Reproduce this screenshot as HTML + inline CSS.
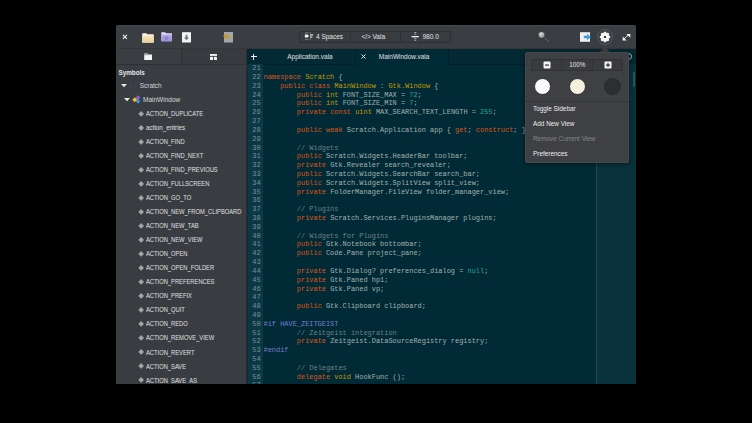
<!DOCTYPE html>
<html><head><meta charset="utf-8">
<style>
*{box-sizing:border-box}
html,body{margin:0;padding:0}
body{width:752px;height:423px;background:#000;overflow:hidden;position:relative;font-family:"Liberation Sans",sans-serif;color:#e8e8e8}
div,svg{position:absolute}
#win{left:116px;top:25px;width:520px;height:359px;background:#3b3d41;border-radius:3px 3px 0 0;overflow:hidden}
#hdr{left:116px;top:25px;width:520px;height:24px;background:#3a3d41;border-radius:3px 3px 0 0;border-bottom:1px solid #3b3434;box-shadow:inset 0 1px 0 rgba(255,255,255,.07)}
#side{left:116px;top:49px;width:131px;height:335px;background:#393c40;border-right:1px solid #302b2e}
.stab{top:49px;height:16px;background:#3d3f43;border-bottom:1px solid #2e3134}
.it{left:146px;height:14px;line-height:14px;color:#e0e0e0;white-space:nowrap}
.dia{left:138.9px;width:4.3px;height:4.3px;background:#a4a4a4;transform:rotate(45deg)}
#ed{left:247px;top:49px;width:389px;height:335px;background:#002b36}
#gut{left:247px;top:64px;width:15.5px;height:320px;background:#0a3945;border-left:1px solid #06303c}
#margin{left:596px;top:64px;width:40px;height:320px;background:#0a323d;border-left:1px solid #1f4a54}
#code{left:263.5px;top:64.2px;height:319.8px;overflow:hidden;font-family:"Liberation Mono",monospace;font-size:6.94px;line-height:8.82px;white-space:pre;color:#a3afaf}
#nums{left:246px;top:64.2px;height:319.8px;overflow:hidden;width:14.7px;text-align:right;font-family:"Liberation Mono",monospace;font-size:6.94px;line-height:8.82px;white-space:pre;color:#7f8f91}
.k{color:#db5418}.t{color:#c29800}.n{color:#2aa198}.c{color:#6d8086}.p{color:#777ccf}
.ui{font-size:6.5px;white-space:nowrap;color:#e6e6e6;line-height:10px}
#pop{left:525px;top:52px;width:104px;height:111px;background:#3e4044;border-radius:2px;border:1px solid #46484c;box-shadow:0 1px 5px rgba(0,0,0,.45)}
.mi{left:533px;font-size:6.4px;color:#ececec;white-space:nowrap;line-height:10px}
</style></head><body>
<div id="win"></div>
<div id="hdr"></div>
<!-- header icons -->
<svg style="left:122.2px;top:34.2px" width="6" height="6" viewBox="0 0 6 6"><path d="M.9 .9L4.9 4.9M4.9 .9L.9 4.9" stroke="#ececec" stroke-width="1.2"/></svg>
<!-- folder beige -->
<svg style="left:141.5px;top:32.6px" width="12" height="10" viewBox="0 0 12 10">
<defs><linearGradient id="fb" x1="0" y1="0" x2="0" y2="1"><stop offset="0" stop-color="#f7e6c2"/><stop offset="1" stop-color="#e9cd92"/></linearGradient></defs>
<path d="M0.3 0.3h4l1 1h6.4v8.4h-11.4z" fill="#faf5ea"/><rect x="0.3" y="2.6" width="11.4" height="7.1" fill="url(#fb)"/></svg>
<!-- folder purple -->
<svg style="left:161.2px;top:32.4px" width="11.2" height="9.6" viewBox="0 0 11.2 9.6">
<defs><linearGradient id="fp" x1="0" y1="0" x2="0" y2="1"><stop offset="0" stop-color="#b7acea"/><stop offset="1" stop-color="#9b8edb"/></linearGradient></defs>
<path d="M0.3 0.3h3.8l1 1h5.8v8h-10.6z" fill="#e2dcf8"/><rect x="0.3" y="2.5" width="10.6" height="6.8" fill="url(#fp)"/><circle cx="5.6" cy="6" r="1.4" fill="none" stroke="#6f60bd" stroke-width=".7"/></svg>
<!-- download doc -->
<svg style="left:181px;top:31px" width="11" height="12" viewBox="0 0 11 12">
<rect x="1" y="1" width="9" height="10.5" fill="#f4f4f4"/><rect x="1" y="1" width="9" height="1" fill="#cfcfcf"/><path d="M4.6 3.8h1.8v2.6h1.7L5.5 9.2 2.9 6.4h1.7z" fill="#6e727a"/></svg>
<!-- revert doc -->
<svg style="left:222px;top:31px" width="12" height="12" viewBox="0 0 12 12">
<rect x="2" y="1" width="9" height="10.5" fill="#a3a5a8"/><path d="M1 5.2L3.8 2.4v1.7c3 0 5 1.6 4.4 4.8C7.6 7.2 6 6.8 3.8 6.9v1.4z" fill="#c29a2c"/></svg>
<!-- center linked buttons -->
<div style="left:299px;top:30.6px;width:152px;height:12.6px;background:#383b3f;border:1px solid #2d3033;border-radius:2px"></div>
<div style="left:350px;top:31px;width:1px;height:12px;background:#2e3034"></div>
<div style="left:400px;top:31px;width:1px;height:12px;background:#2e3034"></div>
<svg style="left:304px;top:31.4px" width="10" height="10" viewBox="0 0 10 10"><path d="M.9 3.4h2.6l1.6 1.6-1.6 1.6H.9z" fill="#f2f2f2"/><rect x="5.9" y="3.4" width="3.2" height="1.1" fill="#f2f2f2"/><rect x="5.9" y="5.5" width="2.5" height="1.1" fill="#e8e8e8"/><rect x="1" y="1.6" width="3.6" height=".6" fill="#9a9a9a"/><rect x="1" y="8" width="3.6" height=".6" fill="#9a9a9a"/><rect x="6.1" y="1" width=".6" height="1.4" fill="#9a9a9a"/><rect x="6.1" y="7.4" width=".6" height="1.4" fill="#9a9a9a"/></svg>
<div class="ui" style="left:316px;top:32px">4 Spaces</div>
<div class="ui" style="left:361.5px;top:32px">&lt;/&gt;</div>
<div class="ui" style="left:372.5px;top:32px">Vala</div>
<svg style="left:411px;top:31px" width="8.5" height="11" viewBox="0 0 8.5 11"><rect x=".6" y="5" width="7.2" height="1.3" fill="#f4f4f4"/><g fill="#a4a4a4"><rect x="3.3" y="1" width="2" height="1"/><rect x="3.3" y="2.6" width="2" height="1"/><rect x="3.3" y="7.2" width="2" height="1"/><rect x="3.3" y="8.8" width="2" height="1"/></g></svg>
<div class="ui" style="left:422.5px;top:32px">980.0</div>
<!-- search -->
<svg style="left:537px;top:31px" width="14" height="13" viewBox="0 0 14 13">
<defs><radialGradient id="sg" cx=".4" cy=".3" r=".8"><stop offset="0" stop-color="#e0e0e0"/><stop offset="1" stop-color="#7a7a7a"/></radialGradient></defs>
<path d="M7.3 6.4l4.2 4.6" stroke="#2a2a2a" stroke-width="1.6"/><path d="M7.3 6.4l4.2 4.6" stroke="#8a8a8a" stroke-width=".9"/><circle cx="4.6" cy="4" r="3.3" fill="url(#sg)" stroke="#2c2d2f" stroke-width=".5"/></svg>
<!-- share -->
<svg style="left:579px;top:31px" width="13" height="12" viewBox="0 0 13 12">
<rect x="1" y="1.2" width="10" height="9.6" fill="#f3efea"/><path d="M4.8 4.7h3.1V2.8L11.8 6 7.9 9.2V7.3H4.8z" fill="#3a9ee2"/></svg>
<!-- gear button -->
<div style="left:597px;top:29.4px;width:15.6px;height:15.6px;border-radius:50%;background:#393c40;border:1.2px solid #55585c"></div>
<svg style="left:598.8px;top:31.2px" width="12" height="12" viewBox="0 0 12 12"><path d="M9.76 4.63 L11.18 4.90 L11.18 7.10 L9.76 7.37 L9.63 7.69 L10.44 8.89 L8.89 10.44 L7.69 9.63 L7.37 9.76 L7.10 11.18 L4.90 11.18 L4.63 9.76 L4.31 9.63 L3.11 10.44 L1.56 8.89 L2.37 7.69 L2.24 7.37 L0.82 7.10 L0.82 4.90 L2.24 4.63 L2.37 4.31 L1.56 3.11 L3.11 1.56 L4.31 2.37 L4.63 2.24 L4.90 0.82 L7.10 0.82 L7.37 2.24 L7.69 2.37 L8.89 1.56 L10.44 3.11 L9.63 4.31Z" fill="#f4f4f4"/><circle cx="6" cy="6" r="4.1" fill="#f4f4f4"/><circle cx="6" cy="6" r="1.1" fill="#0a0a0a"/></svg>
<!-- fullscreen -->
<svg style="left:622.2px;top:33px" width="9" height="8" viewBox="0 0 9 8"><path d="M2.2 5.8L6.6 1.6" stroke="#f0f0f0" stroke-width=".9"/><path d="M4.4 .9h3.9v3.9z" fill="#f4f4f4"/><path d="M.7 7.4h3.9L.7 3.5z" fill="#f4f4f4"/></svg>

<!-- sidebar -->
<div id="side"></div>
<div class="stab" style="left:116px;width:66px;border-right:1px solid #2e3134;background:#3a3d41"></div>
<div class="stab" style="left:182px;width:64px;background:#373a3e"></div>
<svg style="left:143.8px;top:52.8px" width="8.4" height="7.4" viewBox="0 0 8.4 7.4">
<path d="M0.2 0.4h3.4l.8 1h3.8v5.8h-8z" fill="#f4f4f4"/><rect x=".2" y="1.5" width="4" height=".6" fill="#555"/></svg>
<svg style="left:210px;top:53.8px" width="7" height="6.4" viewBox="0 0 7 6.4">
<g fill="#f2f2f2"><rect x="0" y="0" width="7" height="1.9"/><rect x="0" y="2.8" width="3.1" height="3.4" rx=".6"/><rect x="3.9" y="2.8" width="3.1" height="3.4" rx=".6"/></g></svg>
<div class="ui" style="left:118.5px;top:67.8px;font-weight:bold;font-size:6.3px">Symbols</div>
<svg style="left:120.5px;top:84px" width="6" height="3.5" viewBox="0 0 6 3.5"><path d="M0 0h6L3 3.2z" fill="#e6e6e6"/></svg>
<div class="ui" style="left:130px;top:81px;color:#4b416d;font-size:6.5px">{ }</div>
<div class="ui" style="left:139.7px;top:81.4px;color:#d6d6d6">Scratch</div>
<svg style="left:123.8px;top:98px" width="6" height="3.5" viewBox="0 0 6 3.5"><path d="M0 0h6L3 3.2z" fill="#e6e6e6"/></svg>
<svg style="left:132.2px;top:95.2px" width="9" height="9" viewBox="0 0 8.5 8.5">
<path d="M5.7 0.3L8 2.6 5.7 4.9 3.4 2.6z" fill="#9a57d8"/><path d="M5.7 3.6L8 5.9 5.7 8.2 3.4 5.9z" fill="#3a8fe4"/><path d="M2.6 2.2L4.9 4.5 2.6 6.8 0.3 4.5z" fill="#f4c21b"/></svg>
<div class="ui" style="left:143px;top:95px;color:#d8d8d8">MainWindow</div>
<div class="dia" style="top:111.75px"></div><div class="it" style="top:107.0px;font-size:6.4px;transform:scaleX(0.905);transform-origin:0 50%">ACTION_DUPLICATE</div>
<div class="dia" style="top:125.78px"></div><div class="it" style="top:121.03px;font-size:6.3px">action_entries</div>
<div class="dia" style="top:139.81px"></div><div class="it" style="top:135.06px;font-size:6.4px;transform:scaleX(0.905);transform-origin:0 50%">ACTION_FIND</div>
<div class="dia" style="top:153.84px"></div><div class="it" style="top:149.09px;font-size:6.4px;transform:scaleX(0.905);transform-origin:0 50%">ACTION_FIND_NEXT</div>
<div class="dia" style="top:167.87px"></div><div class="it" style="top:163.12px;font-size:6.4px;transform:scaleX(0.905);transform-origin:0 50%">ACTION_FIND_PREVIOUS</div>
<div class="dia" style="top:181.9px"></div><div class="it" style="top:177.15px;font-size:6.4px;transform:scaleX(0.905);transform-origin:0 50%">ACTION_FULLSCREEN</div>
<div class="dia" style="top:195.93px"></div><div class="it" style="top:191.18px;font-size:6.4px;transform:scaleX(0.905);transform-origin:0 50%">ACTION_GO_TO</div>
<div class="dia" style="top:209.96px"></div><div class="it" style="top:205.21px;font-size:6.4px;transform:scaleX(0.905);transform-origin:0 50%">ACTION_NEW_FROM_CLIPBOARD</div>
<div class="dia" style="top:223.99px"></div><div class="it" style="top:219.24px;font-size:6.4px;transform:scaleX(0.905);transform-origin:0 50%">ACTION_NEW_TAB</div>
<div class="dia" style="top:238.02px"></div><div class="it" style="top:233.27px;font-size:6.4px;transform:scaleX(0.905);transform-origin:0 50%">ACTION_NEW_VIEW</div>
<div class="dia" style="top:252.05px"></div><div class="it" style="top:247.3px;font-size:6.4px;transform:scaleX(0.905);transform-origin:0 50%">ACTION_OPEN</div>
<div class="dia" style="top:266.08px"></div><div class="it" style="top:261.33px;font-size:6.4px;transform:scaleX(0.905);transform-origin:0 50%">ACTION_OPEN_FOLDER</div>
<div class="dia" style="top:280.10999999999996px"></div><div class="it" style="top:275.35999999999996px;font-size:6.4px;transform:scaleX(0.905);transform-origin:0 50%">ACTION_PREFERENCES</div>
<div class="dia" style="top:294.14px"></div><div class="it" style="top:289.39px;font-size:6.4px;transform:scaleX(0.905);transform-origin:0 50%">ACTION_PREFIX</div>
<div class="dia" style="top:308.16999999999996px"></div><div class="it" style="top:303.41999999999996px;font-size:6.4px;transform:scaleX(0.905);transform-origin:0 50%">ACTION_QUIT</div>
<div class="dia" style="top:322.2px"></div><div class="it" style="top:317.45px;font-size:6.4px;transform:scaleX(0.905);transform-origin:0 50%">ACTION_REDO</div>
<div class="dia" style="top:336.22999999999996px"></div><div class="it" style="top:331.47999999999996px;font-size:6.4px;transform:scaleX(0.905);transform-origin:0 50%">ACTION_REMOVE_VIEW</div>
<div class="dia" style="top:350.26px"></div><div class="it" style="top:345.51px;font-size:6.4px;transform:scaleX(0.905);transform-origin:0 50%">ACTION_REVERT</div>
<div class="dia" style="top:364.28999999999996px"></div><div class="it" style="top:359.53999999999996px;font-size:6.4px;transform:scaleX(0.905);transform-origin:0 50%">ACTION_SAVE</div>
<div class="dia" style="top:378.32px"></div><div class="it" style="top:373.57px;font-size:6.4px;transform:scaleX(0.905);transform-origin:0 50%">ACTION_SAVE_AS</div>

<!-- editor -->
<div id="ed"></div>
<!-- tab bar -->
<div style="left:247px;top:49px;width:389px;height:15.5px;background:#032a34;border-bottom:1px solid #011f28"></div>
<div style="left:354.5px;top:49px;width:94px;height:16px;background:#002b36;border-left:1px solid #011d25;border-right:1px solid #011d25"></div>
<div style="left:251px;top:56px;width:5.5px;height:1px;background:#f0f0f0"></div><div style="left:253px;top:54px;width:1px;height:5.5px;background:#f0f0f0"></div>
<div class="ui" style="left:287.2px;top:51.5px;color:#e0e0e0">Application.vala</div>
<svg style="left:360.8px;top:54.2px" width="5" height="5" viewBox="0 0 5 5"><path d="M.5 .5L4.5 4.5M4.5 .5L.5 4.5" stroke="#e8e8e8" stroke-width="1"/></svg>
<div class="ui" style="left:378.8px;top:51.5px;color:#e0e0e0">MainWindow.vala</div>
<div style="left:624.8px;top:52.6px;width:7.6px;height:7.6px;border-radius:50%;border:1px solid #b8b8b8"></div>
<div id="gut"></div>
<div id="margin"></div>
<div style="left:633px;top:71.8px;width:2px;height:15.6px;border-radius:1px;background:#275561"></div>
<div id="nums">21
22
23
24
25
26
27
28
29
30
31
32
33
34
35
36
37
38
39
40
41
42
43
44
45
46
47
48
49
50
51
52
53
54
55
56
57</div>
<div id="code">
<span class="k">namespace</span> <span class="t">Scratch</span> {
    <span class="k">public</span> <span class="k">class</span> <span class="t">MainWindow</span> : <span class="t">Gtk.Window</span> {
        <span class="k">public</span> <span class="t">int</span> FONT_SIZE_MAX = <span class="n">72</span>;
        <span class="k">public</span> <span class="t">int</span> FONT_SIZE_MIN = <span class="n">7</span>;
        <span class="k">private</span> <span class="k">const</span> <span class="t">uint</span> MAX_SEARCH_TEXT_LENGTH = <span class="n">255</span>;

        <span class="k">public</span> <span class="k">weak</span> Scratch.Application app { <span class="k">get</span>; <span class="k">construct</span>; }

        <span class="c">// Widgets</span>
        <span class="k">public</span> Scratch.Widgets.HeaderBar toolbar;
        <span class="k">private</span> Gtk.Revealer search_revealer;
        <span class="k">public</span> Scratch.Widgets.SearchBar search_bar;
        <span class="k">public</span> Scratch.Widgets.SplitView split_view;
        <span class="k">private</span> FolderManager.FileView folder_manager_view;

        <span class="c">// Plugins</span>
        <span class="k">private</span> Scratch.Services.PluginsManager plugins;

        <span class="c">// Widgets for Plugins</span>
        <span class="k">public</span> Gtk.Notebook bottombar;
        <span class="k">public</span> Code.Pane project_pane;

        <span class="k">private</span> Gtk.Dialog? preferences_dialog = <span class="n">null</span>;
        <span class="k">private</span> Gtk.Paned hp1;
        <span class="k">private</span> Gtk.Paned vp;

        <span class="k">public</span> Gtk.Clipboard clipboard;

<span class="p">#if HAVE_ZEITGEIST</span>
        <span class="c">// Zeitgeist integration</span>
        <span class="k">private</span> Zeitgeist.DataSourceRegistry registry;
<span class="p">#endif</span>

        <span class="c">// Delegates</span>
        <span class="k">delegate</span> <span class="t">void</span> HookFunc ();
</div>

<!-- popover -->
<svg style="left:599px;top:45.6px" width="11.5" height="7" viewBox="0 0 11.5 7"><path d="M0 7L5.75 0.2 11.5 7z" fill="#3e4044"/></svg>
<div id="pop"></div>
<div style="left:531px;top:58.7px;width:91.5px;height:12.7px;background:#393b3f;border:1px solid #303235;border-radius:2px"></div>
<div style="left:560.8px;top:59px;width:1px;height:12px;background:#303235"></div>
<div style="left:592px;top:59px;width:1px;height:12px;background:#303235"></div>
<svg style="left:542.5px;top:61px" width="8" height="8" viewBox="0 0 8 8"><rect x=".5" y=".5" width="7" height="7" rx="1" fill="#f4f4f4"/><rect x="2" y="3.5" width="4" height="1.1" fill="#222"/></svg>
<div class="ui" style="left:569.2px;top:60px;font-size:6.3px">100%</div>
<svg style="left:603.5px;top:61px" width="8" height="8" viewBox="0 0 8 8"><rect x=".5" y=".5" width="7" height="7" rx="1" fill="#f4f4f4"/><rect x="2" y="3.5" width="4" height="1.1" fill="#222"/><rect x="3.45" y="2" width="1.1" height="4" fill="#222"/></svg>
<div style="left:534px;top:77.5px;width:17px;height:17px;border-radius:50%;background:#fbfbfb;border:1px solid #2a2c2f"></div>
<div style="left:568.8px;top:77.5px;width:17px;height:17px;border-radius:50%;background:#f5efdc;border:1px solid #2a2c2f"></div>
<div style="left:603.8px;top:77.5px;width:17px;height:17px;border-radius:50%;background:#2c2f31;border:1px solid #27292b"></div>
<div style="left:525px;top:100.5px;width:104px;height:1px;background:#333538"></div>
<div class="mi" style="top:103.5px">Toggle Sidebar</div>
<div class="mi" style="top:118.5px">Add New View</div>
<div class="mi" style="top:133.5px;color:#86878a">Remove Current View</div>
<div class="mi" style="top:148.5px">Preferences</div>
<div style="left:0;top:384px;width:752px;height:39px;background:#000"></div>
</body></html>
